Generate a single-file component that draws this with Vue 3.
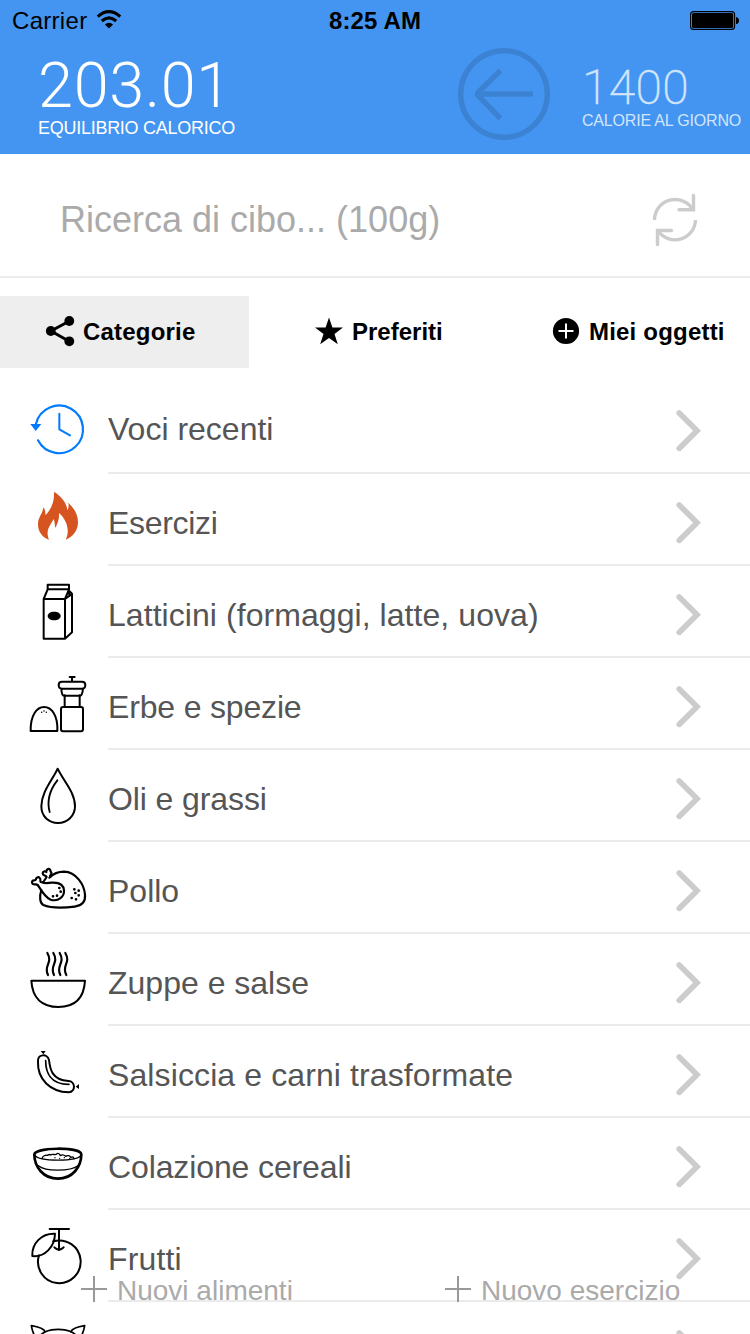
<script setup>
const solid = (d) => ({ d, fill: true })
const line = (d, w = 6) => ({ d, w })

const rows = [
  {
    label: 'Voci recenti', ls: 0, color: '#007aff', y: -24,
    shapes: [
      line('M48 101A71.5 71.5 0 1 1 54 151', 6.5),
      line('M118 71V118L150 136', 6),
      solid('M31 102H64L47 123Z')
    ]
  },
  {
    label: 'Esercizi', ls: -0.3, color: '#d6541f', y: 252,
    shapes: [
      solid('M102 305C127 321 141 341 142 361C146 354 147 347 145 338C161 354 174 372 174 396C174 422 158 441 137 449C151 421 140 389 117 369C119 387 111 403 106 414C104 407 105 396 101 387C93 402 84 412 83 427C82 436 85 444 87 449C68 443 54 424 54 404C53 382 68 373 70 352C76 359 77 368 76 376C91 360 104 339 102 305Z')
    ]
  },
  {
    label: 'Latticini (formaggi, latte, uova)', ls: 0.06, y: -12,
    shapes: [
      line('M71 87H135V206H71ZM71 87L83 58H147L135 87M83 58V44H147V58M147 62L156 71V187L135 206M147 62L148 78L156 71M148 78L135 87'),
      solid('M83 138C83 121 122 121 122 138C122 155 83 155 83 138Z')
    ]
  },
  {
    label: 'Erbe e spezie', ls: -0.17, y: 264,
    shapes: [
      line('M32 483C31 435 51 411 72 411C94 411 114 435 112 483Z'),
      line('M134 376V411M179 376V411M129 411H183Q189 411 189 417V478Q189 484 183 484H129Q123 484 123 478V417Q123 411 129 411Z'),
      line('M124 356H189Q187 377 180 377H132Q125 377 124 356M126 335H186Q196 335 196 345Q196 356 186 356H126Q116 356 116 345Q116 335 126 335ZM156 335V323M149 321H164'),
      line('M65 427h.1M72 423h.1M79 427h.1', 4.5)
    ]
  },
  {
    label: 'Oli e grassi', ls: -0.1, y: -15,
    shapes: [
      line('M113 41C97 76 64 111 64 154C64 185 87 204 114 204C142 204 165 183 165 154C165 111 129 76 113 41Z'),
      line('M112 76C91 103 79 134 89 171', 5.5)
    ]
  },
  {
    label: 'Pollo', ls: 0, y: 261,
    shapes: [
      line('M88 368C102 354 116 350 132 350C169 351 193 390 195 419C197 440 187 452 164 455C129 459 91 459 70 450C59 444 58 424 64 405', 6.5),
      line('M54 391C68 414 79 429 92 434C116 441 133 424 132 407C131 389 116 382 96 383C81 384 74 386 68 382', 6.5),
      line('M54 391C48 385 45 390 39 387C34 384 35 376 42 376C45 376 47 376 48 373C47 368 55 364 59 369C64 373 59 378 62 381L68 382M72 378L80 366C77 360 68 363 68 355C68 349 75 348 79 351C78 343 86 339 90 344C92 347 91 349 93 351C97 355 92 360 90 363L91 366', 6.5),
      line('M118 399h.1M122 410h.1M111 422h.1M99 424h.1M163 403h.1M176 407h.1M166 414h.1M176 421h.1M155 429h.1M168 433h.1', 8)
    ]
  },
  {
    label: 'Zuppe e salse', ls: 0, y: -18,
    shapes: [
      line('M34 122H195C192 175 164 201 115 201C67 201 37 175 34 122Z'),
      line('M82 39C100 70 69 76 84 105M100 39C118 70 87 76 102 105M119 39C137 70 106 76 121 105M136 39C154 70 123 76 139 105', 6.5)
    ]
  },
  {
    label: 'Salsiccia e carni trasformate', ls: 0.11, y: 258,
    shapes: [
      line('M54 366C52 341 82 340 87 360C90 386 95 420 145 423C167 424 168 455 146 457C91 455 52 418 54 366Z'),
      line('M77 362C77 395 90 433 147 433', 5),
      solid('M62 333H77L70 343ZM177 432V447L167 440Z')
    ]
  },
  {
    label: 'Colazione cereali', ls: -0.12, y: -36,
    shapes: [
      line('M43 73C48 51 179 50 184 73C184 111 157 146 114 146C70 146 43 111 43 73Z', 8),
      line('M45 76C57 95 171 95 183 76M55 107C77 125 151 124 174 107', 4),
      line('M67 84C69 74 76 79 78 75C84 79 86 70 91 75C98 70 105 76 109 73C113 67 119 71 121 77C128 72 134 76 137 79C144 74 150 78 152 82C158 79 161 82 162 86', 4),
      line('M105 83h.1M119 85h.1M133 83h.1M149 86h.1', 4)
    ]
  },
  {
    label: 'Frutti', ls: 0.15, y: 240,
    shapes: [
      line('M57 376A64 64 0 1 0 100 334'),
      line('M105 311C65 309 35 340 37 378C74 382 104 351 105 311Z', 6),
      line('M89 297H147M117 298V360M103 352C106 357 111 357 117 360C123 357 128 357 131 352')
    ]
  },
  {
    label: '', ls: 0, y: 516,
    shapes: [
      line('M76 606C71 594 54 590 34 587C36 599 38 608 44 617M152 606C157 594 174 590 194 587C192 599 190 608 184 617M80 604C97 596 132 596 150 604M80 604C70 608 62 613 58 620M150 604C160 608 167 613 171 620', 5)
    ]
  }
]
</script>

<template>
  <main class="screen">
    <header class="header">
      <div class="status">
        <div class="carrier">
          <span>Carrier</span>
          <svg width="26" height="20" viewBox="0 0 26 20">
            <path d="M1.8 6.6Q13 -3.2 24.2 6.6" />
            <path d="M5.8 11Q13 4.6 20.2 11" />
            <path d="M13 18.6L8.9 14.4Q13 11 17.1 14.4Z" class="dot" />
          </svg>
        </div>
        <strong class="time">8:25 AM</strong>
        <svg class="battery" width="50" height="20" viewBox="0 0 50 20">
          <rect x=".6" y=".6" width="44" height="17.8" rx="3" fill="none" stroke="#000" stroke-width="1.1" />
          <rect x="2" y="2" width="41.2" height="15" rx="1.5" />
          <path d="M46 6Q49 6.5 49 9.6T46 13.2Z" />
        </svg>
      </div>
      <div class="summary">
        <section class="balance">
          <div class="amount">203.01</div>
          <div class="caption">EQUILIBRIO CALORICO</div>
        </section>
        <svg class="back" width="92" height="92" viewBox="0 0 92 92">
          <circle cx="46" cy="46" r="43.3" />
          <path d="M75 46H20M42.500 22.500L20.500 44Q18.600 46 20.500 48L42.500 70.500" />
        </svg>
        <section class="goal">
          <div class="amount">1400</div>
          <div class="caption">CALORIE AL GIORNO</div>
        </section>
      </div>
    </header>

    <div class="search">
      <span>Ricerca di cibo... (100g)</span>
      <svg width="48" height="54" viewBox="0 0 48 54">
        <path d="M2.500 27A20.500 20.500 0 0 1 40 15.500M43.500 27A20.500 20.500 0 0 1 6.500 38.500" />
        <path d="M41.500 2.500V16.800H27M5.500 51.500V37.500H19.500" class="tip" />
      </svg>
    </div>

    <nav class="tabs">
      <div class="tab active">
        <svg width="30" height="32" viewBox="0 0 30 32">
          <path d="M24.500 6L6 16L24.500 26.500" fill="none" stroke="#000" stroke-width="3" />
          <circle cx="24.300" cy="6" r="4.900" /><circle cx="5.800" cy="16" r="4.900" /><circle cx="24.300" cy="26.300" r="4.900" />
        </svg>
        <span class="wide">Categorie</span>
      </div>
      <div class="tab">
        <svg width="28" height="28" viewBox="0 0 28 28">
          <path d="M14 .5L17.400 10.600H28L19.500 16.900L22.800 27.200L14 21L5.200 27.200L8.500 16.900L0 10.600H10.600Z" />
        </svg>
        <span>Preferiti</span>
      </div>
      <div class="tab">
        <svg width="28" height="28" viewBox="0 0 28 28">
          <circle cx="14" cy="14" r="13.100" />
          <path d="M14 6.500V21.500M6.500 14H21.500" stroke="#fff" stroke-width="2" />
        </svg>
        <span class="wide">Miei oggetti</span>
      </div>
    </nav>

    <ul class="list">
      <li v-for="(row, i) in rows" :key="i" class="row">
        <svg class="icon" width="60" height="92" :viewBox="`24 ${row.y} 180 276`" :style="{ color: row.color }">
          <path
            v-for="(s, j) in row.shapes" :key="j" :d="s.d"
            :class="s.fill ? 'solid' : 'line'" :stroke-width="s.w"
          />
        </svg>
        <div class="body">
          <span class="label" :style="{ letterSpacing: row.ls + 'px' }">{{ row.label }}</span>
          <svg class="chevron" width="26" height="44" viewBox="0 0 26 44">
            <path d="M4.200 4L22 21.700L4.200 39.400" />
          </svg>
        </div>
      </li>
    </ul>

    <footer class="actions">
      <div class="action">
        <svg width="26" height="26" viewBox="0 0 26 26"><path d="M13 0V26M0 13H26" /></svg>
        <span>Nuovi alimenti</span>
      </div>
      <div class="action">
        <svg width="26" height="26" viewBox="0 0 26 26"><path d="M13 0V26M0 13H26" /></svg>
        <span>Nuovo esercizio</span>
      </div>
    </footer>
  </main>
</template>

<style>
body { margin: 0; overflow: hidden; }
</style>

<style scoped>
.screen {
  position: relative;
  width: 750px;
  height: 1334px;
  overflow: hidden;
  background: #fff;
  font-family: "Liberation Sans", Arial, sans-serif;
  white-space: nowrap;
}
svg { display: block; flex: none; }
.header { height: 154px; background: #4495f1; }
.status {
  display: grid;
  grid-template-columns: 1fr auto 1fr;
  height: 40px;
  padding: 0 10px 0 12px;
  font-size: 24px;
  line-height: 42px;
}
.carrier { display: flex; gap: 9px; letter-spacing: .3px; }
.carrier svg { margin-top: 10px; }
.carrier path { fill: none; stroke: #000; stroke-width: 3.2; }
.carrier .dot { fill: #000; stroke: none; }
.time { margin-left: -2px; letter-spacing: .15px; }
.battery { justify-self: end; margin-top: 11px; }
.summary { display: flex; color: #fff; }
.balance { width: 420px; padding: 15px 0 0 38px; }
.balance .amount { font: 300 63px/61px Roboto, sans-serif; letter-spacing: .7px; }
.balance .caption { font-size: 18px; line-height: 24px; letter-spacing: -.27px; }
.back { margin: 8px 32px 0 0; }
.back * { fill: none; stroke: #3c82d3; stroke-width: 5.4; }
.goal { padding-top: 24px; color: #d2e5fb; }
.goal .amount { font: 200 48px/48px Roboto, sans-serif; letter-spacing: .3px; -webkit-text-stroke: .4px #d2e5fb; }
.goal .caption { font-size: 16px; line-height: 18px; letter-spacing: -.18px; }
.search {
  display: flex;
  justify-content: space-between;
  height: 122px;
  padding: 0 50px 0 60px;
  border-bottom: 2px solid #ececec;
  color: #aaa;
  font-size: 36px;
  line-height: 132px;
}
.search svg { margin-top: 39px; fill: none; stroke: #ccc; stroke-width: 3.4; }
.search .tip { stroke-linecap: round; stroke-linejoin: miter; }
.tabs { display: grid; grid-template-columns: 249px 249px 252px; margin-top: 18px; height: 72px; }
.tab { display: flex; align-items: center; font-size: 24px; font-weight: 700; line-height: 72px; }
.active { background: #eee; }
.wide { letter-spacing: .2px; }
.tab svg { margin-top: -2px; }
.tab:nth-child(1) { padding-left: 45px; gap: 8px; }
.tab:nth-child(2) { padding-left: 66px; gap: 9px; }
.tab:nth-child(3) { padding-left: 54px; gap: 9px; }
.list { margin: 14px 0 0; padding: 0; list-style: none; }
.row { display: flex; height: 92px; padding-left: 28px; }
.icon { margin-right: 20px; color: #000; }
.line { fill: none; stroke: currentColor; stroke-linecap: round; stroke-linejoin: round; }
.solid { fill: currentColor; }
.body {
  flex: 1;
  display: flex;
  justify-content: space-between;
  height: 90px;
  padding-right: 49px;
  border-bottom: 2px solid #ebebeb;
}
.label { padding-top: 6px; color: #555; font-size: 32px; line-height: 86px; height: 84px; }
.row:first-child .label { padding-top: 4px; }
.chevron { margin-top: 27px; fill: none; stroke: #ccc; stroke-width: 5.6; stroke-linecap: round; }
.actions {
  position: absolute;
  left: 81px;
  right: 0;
  bottom: 26px;
  display: grid;
  grid-template-columns: 364px 1fr;
  color: #aaa;
  font-size: 28px;
  line-height: 34px;
}
.action { display: flex; gap: 10px; text-shadow: 0 0 30px rgba(0, 0, 0, .06); }
.action svg { margin-top: 2px; stroke: #999; stroke-width: 2; }
</style>
